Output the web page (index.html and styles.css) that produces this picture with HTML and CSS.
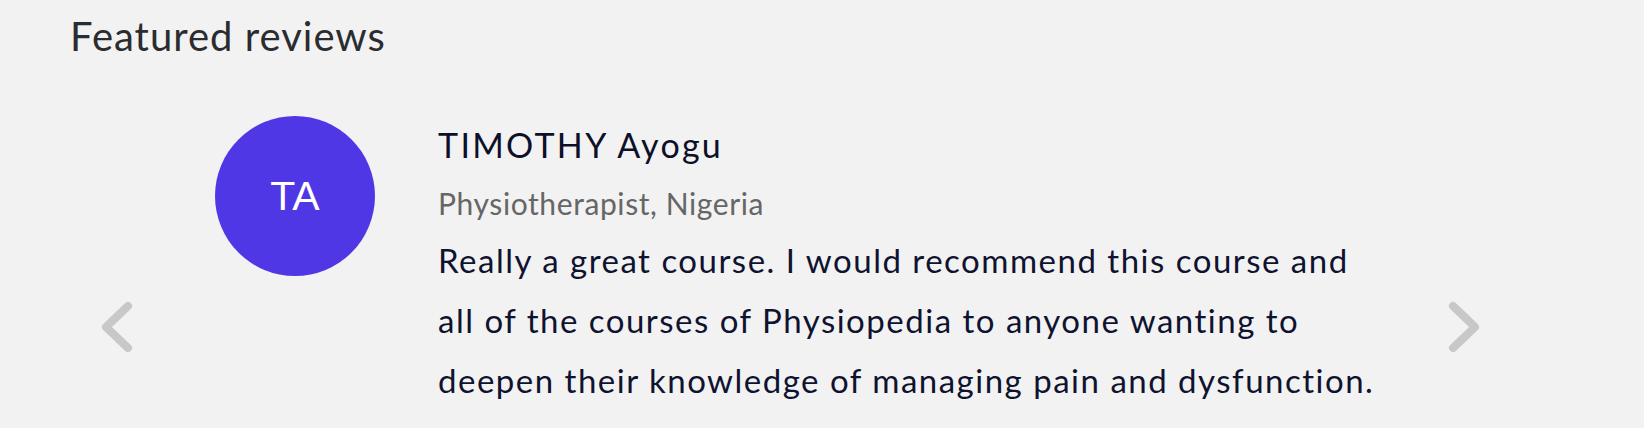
FILE: index.html
```html
<!DOCTYPE html>
<html lang="en">
<head>
<meta charset="utf-8">
<title>Featured reviews</title>
<link rel="stylesheet" href="styles.css">
</head>
<body>
<section class="reviews">
  <h2 class="reviews-title">Featured reviews</h2>
  <div class="carousel">
    <button class="arrow arrow-prev" aria-label="Previous review">
      <svg width="34" height="52" viewBox="0 0 34 52"><polyline points="28,5 6,26 28,47" fill="none" stroke="#c8c8c8" stroke-width="8" stroke-linecap="round" stroke-linejoin="round"/></svg>
    </button>
    <div class="slide">
      <div class="avatar">TA</div>
      <div class="review">
        <div class="review-name">TIMOTHY Ayogu</div>
        <div class="review-role">Physiotherapist, Nigeria</div>
        <p class="review-text">Really a great course. I would recommend this course and all of the courses of Physiopedia to anyone wanting to deepen their knowledge of managing pain and dysfunction.</p>
      </div>
    </div>
    <button class="arrow arrow-next" aria-label="Next review">
      <svg width="34" height="52" viewBox="0 0 34 52"><polyline points="6,5 28,26 6,47" fill="none" stroke="#c8c8c8" stroke-width="8" stroke-linecap="round" stroke-linejoin="round"/></svg>
    </button>
  </div>
</section>
</body>
</html>
```

FILE: styles.css
```css
html, body {
  margin: 0;
  padding: 0;
  background: #f2f2f2;
}

body {
  font-family: Lato, "Noto Sans", sans-serif;
  height: 428px;
  overflow: hidden;
}

.reviews {
  padding-top: 12px;
}

.reviews-title {
  margin: 0 0 0 70px;
  font-size: 40px;
  line-height: 48px;
  font-weight: 400;
  letter-spacing: 1px;
  color: #2a2c30;
}

.carousel {
  display: flex;
  align-items: flex-start;
  margin-top: 56px;
  padding-left: 100px;
  width: 1481px;
  box-sizing: border-box;
}

.arrow {
  flex: none;
  width: 34px;
  height: 52px;
  padding: 0;
  margin-top: 185px;
  border: 0;
  background: none;
  cursor: pointer;
}

.arrow svg {
  display: block;
}

.arrow-next {
  margin-left: auto;
}

.slide {
  display: flex;
  align-items: flex-start;
  margin-left: 81px;
}

.avatar {
  flex: none;
  width: 160px;
  height: 160px;
  border-radius: 50%;
  background: #5037e5;
  color: #ffffff;
  font-family: "Liberation Sans", Arial, sans-serif;
  font-size: 41px;
  display: flex;
  align-items: center;
  justify-content: center;
}

.review {
  margin-left: 63px;
  padding-top: 7px;
  width: 938px;
}

.review-name {
  font-size: 34px;
  line-height: 44px;
  font-weight: 400;
  letter-spacing: 2.3px;
  color: #0d1029;
}

.review-role {
  margin-top: 16px;
  font-size: 30px;
  line-height: 40px;
  letter-spacing: 0.6px;
  color: #666666;
}

.review-text {
  margin: 7px 0 0;
  font-size: 33px;
  line-height: 60px;
  letter-spacing: 1.5px;
  color: #0f1330;
}
```
